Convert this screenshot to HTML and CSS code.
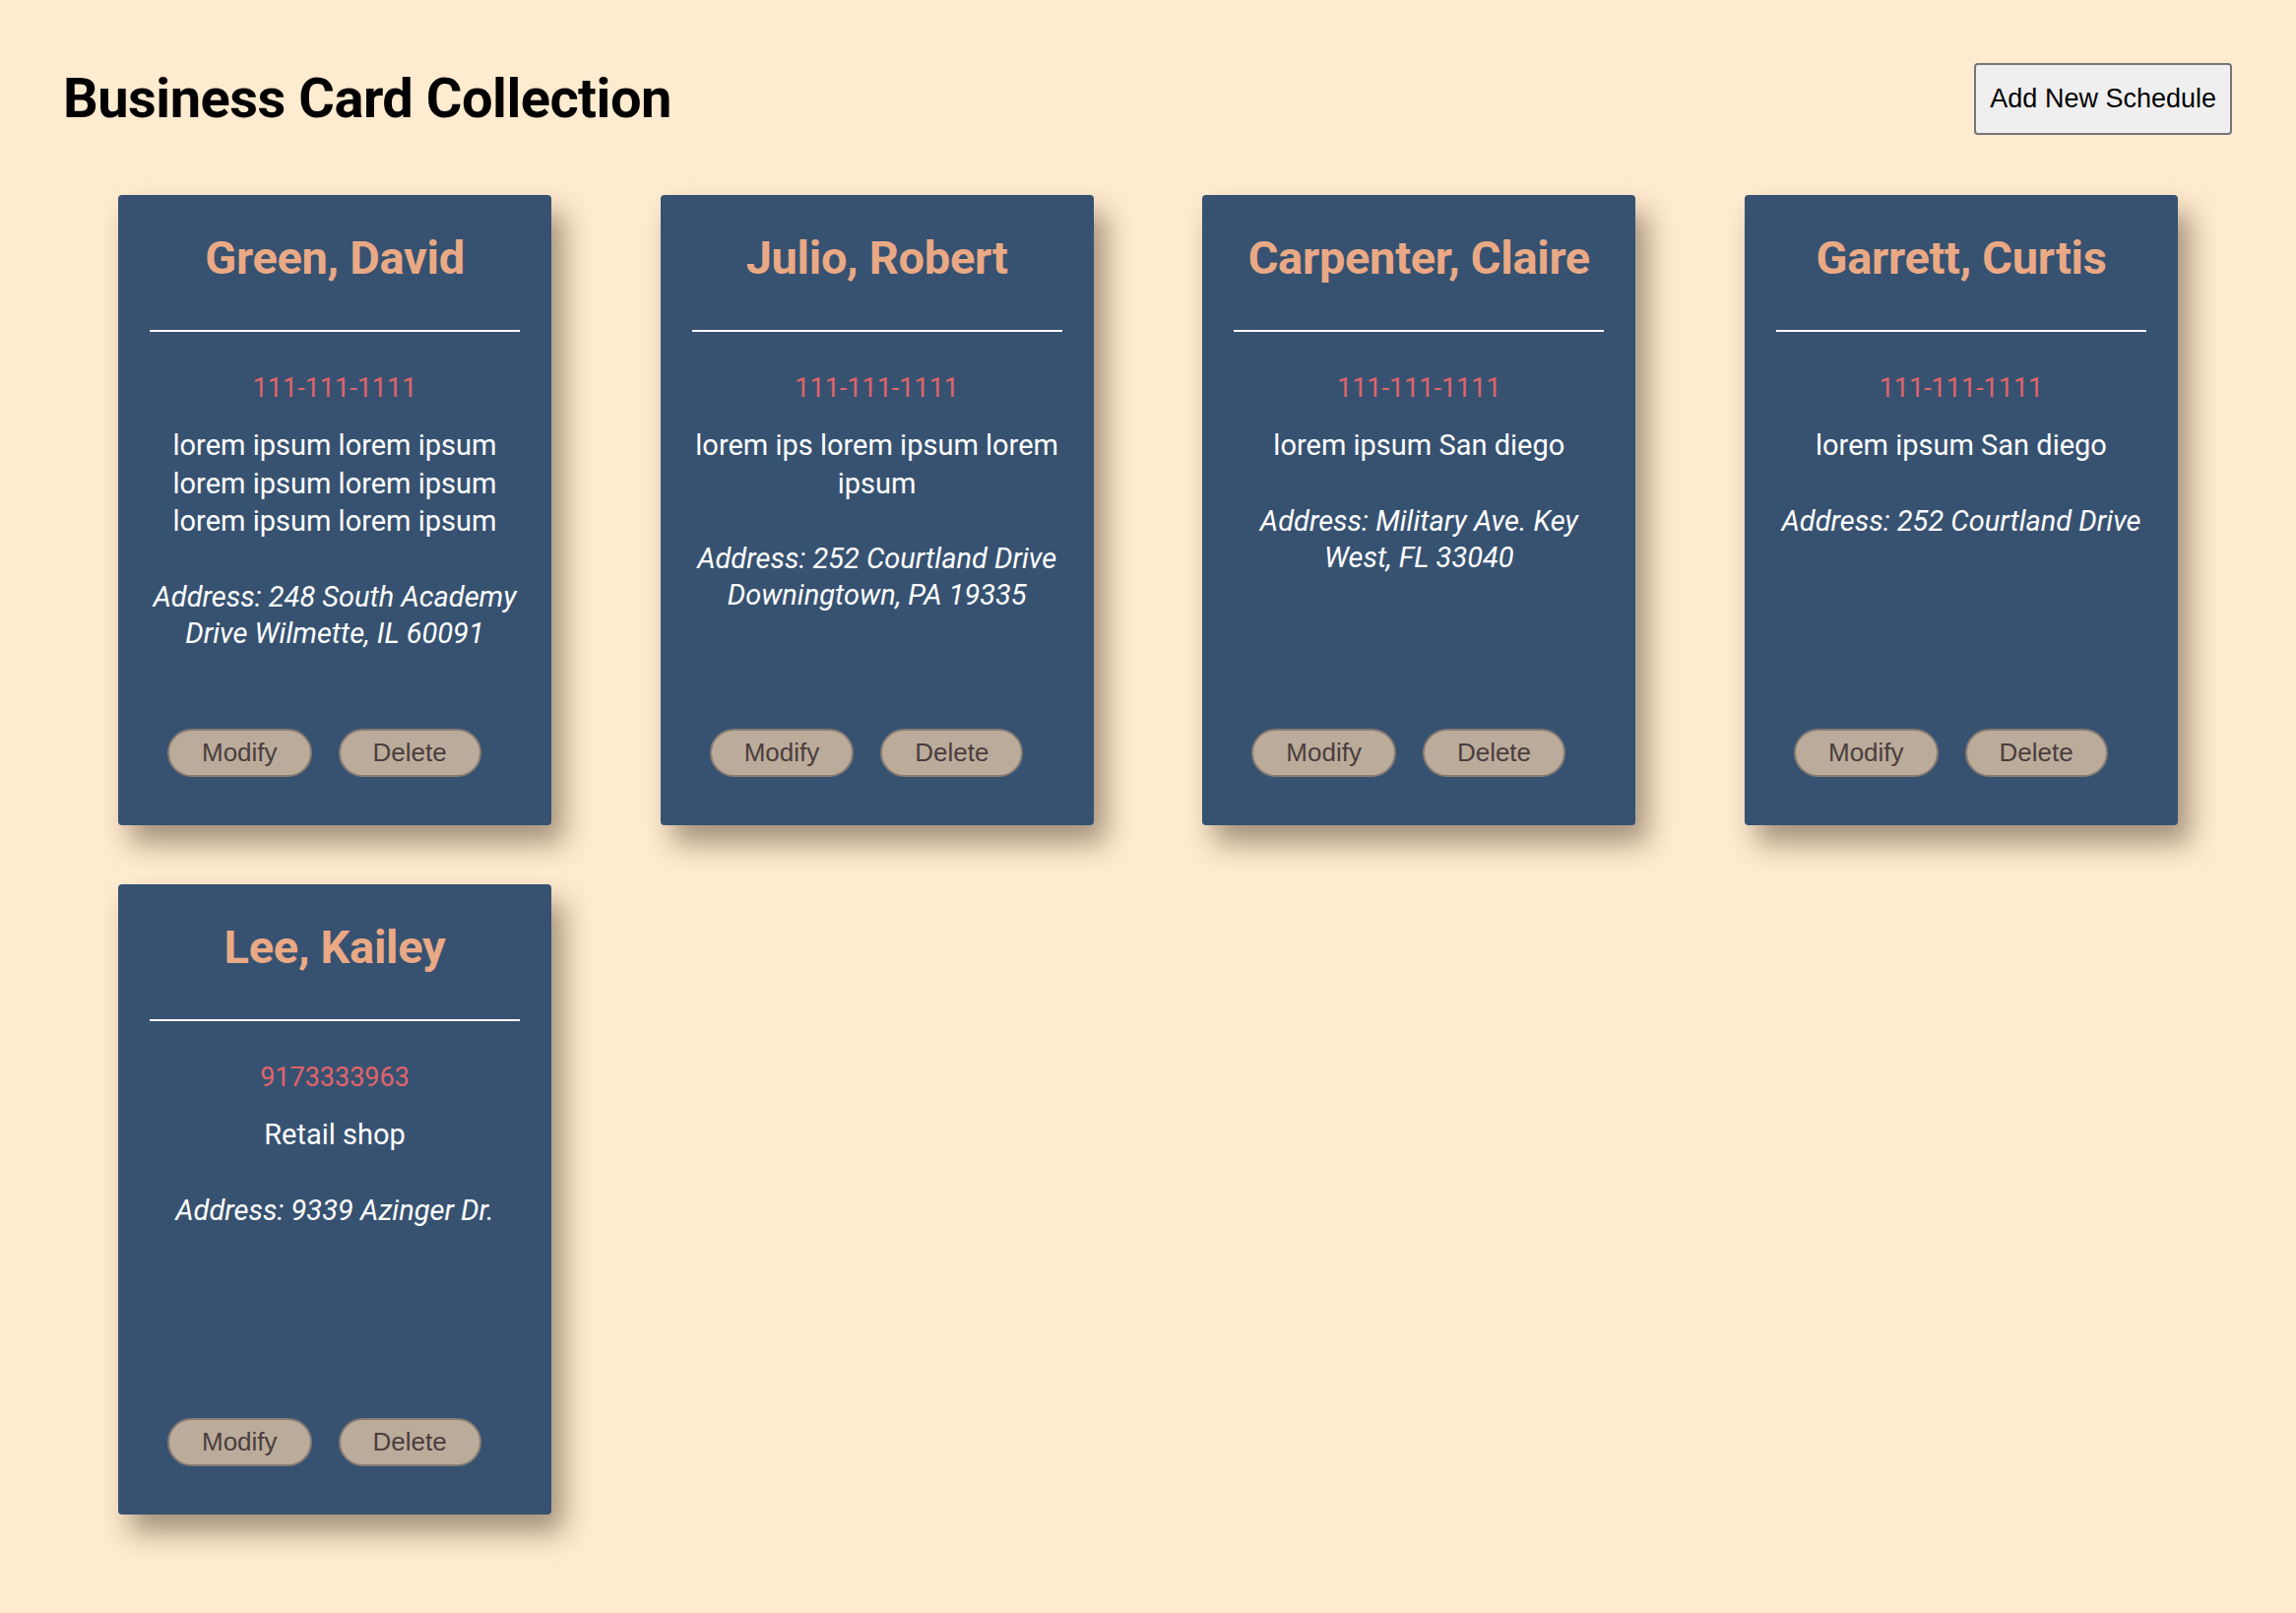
FILE: index.html
```html
<!DOCTYPE html>
<html lang="en">
<head>
<meta charset="utf-8">
<title>Business Card Collection</title>
<link rel="stylesheet" href="styles.css">
</head>
<body>
<header class="header">
  <h1 class="title">Business Card Collection</h1>
  <button class="add-btn">Add New Schedule</button>
</header>
<main class="grid">
  <article class="card">
    <h2 class="name">Green, David</h2>
    <hr class="divider">
    <p class="phone">111-111-1111</p>
    <p class="desc">lorem ipsum lorem ipsum lorem ipsum lorem ipsum lorem ipsum lorem ipsum</p>
    <p class="address">Address: 248 South Academy Drive Wilmette, IL 60091</p>
    <div class="actions"><button class="act">Modify</button><button class="act">Delete</button></div>
  </article>
  <article class="card">
    <h2 class="name">Julio, Robert</h2>
    <hr class="divider">
    <p class="phone">111-111-1111</p>
    <p class="desc">lorem ips lorem ipsum lorem ipsum</p>
    <p class="address">Address: 252 Courtland Drive Downingtown, PA 19335</p>
    <div class="actions"><button class="act">Modify</button><button class="act">Delete</button></div>
  </article>
  <article class="card">
    <h2 class="name">Carpenter, Claire</h2>
    <hr class="divider">
    <p class="phone">111-111-1111</p>
    <p class="desc">lorem ipsum San diego</p>
    <p class="address">Address: Military Ave. Key West, FL 33040</p>
    <div class="actions"><button class="act">Modify</button><button class="act">Delete</button></div>
  </article>
  <article class="card">
    <h2 class="name">Garrett, Curtis</h2>
    <hr class="divider">
    <p class="phone">111-111-1111</p>
    <p class="desc">lorem ipsum San diego</p>
    <p class="address">Address: 252 Courtland Drive</p>
    <div class="actions"><button class="act">Modify</button><button class="act">Delete</button></div>
  </article>
  <article class="card">
    <h2 class="name">Lee, Kailey</h2>
    <hr class="divider">
    <p class="phone">9173333963</p>
    <p class="desc">Retail shop</p>
    <p class="address">Address: 9339 Azinger Dr.</p>
    <div class="actions"><button class="act">Modify</button><button class="act">Delete</button></div>
  </article>
</main>
</body>
</html>
```
FILE: styles.css
```css
html, body {
  margin: 0;
  padding: 0;
}
body {
  background: #ffebcf;
  font-family: Roboto, "Noto Sans", sans-serif;
  min-height: 1638px;
}
.header {
  display: flex;
  justify-content: space-between;
  align-items: center;
  padding: 64px 65px 0 64px;
}
.title {
  margin: 0;
  font-family: Roboto, sans-serif;
  font-weight: 700;
  font-size: 56px;
  line-height: 67px;
  letter-spacing: -0.5px;
  color: #000;
}
.add-btn {
  height: 73px;
  padding: 0 14px;
  font-family: "Liberation Sans", Arial, sans-serif;
  font-size: 27px;
  color: #000;
  background: #efefef;
  border: 2px solid #767676;
  border-radius: 4px;
}
.grid {
  display: grid;
  grid-template-columns: repeat(4, 440px);
  column-gap: 110.67px;
  row-gap: 60px;
  padding: 61px 0 0 120px;
}
.card {
  box-sizing: border-box;
  width: 440px;
  height: 640px;
  background: #375271;
  border-radius: 4px;
  box-shadow: 12px 18px 28px rgba(50, 35, 20, 0.45);
  display: flex;
  flex-direction: column;
  padding: 36px 30px 49px;
  color: #fff;
  text-align: center;
}
.name {
  margin: 0;
  font-size: 47px;
  line-height: 56px;
  font-weight: 700;
  color: #eaa985;
  letter-spacing: -0.3px;
  white-space: nowrap;
}
.divider {
  margin: 45px 2px 0;
  border: 0;
  height: 2px;
  background: #fff;
}
.phone {
  margin: 41px 0 0;
  font-size: 27px;
  line-height: 32px;
  color: #e0646b;
}
.desc {
  margin: 23px 0 0;
  font-size: 29px;
  line-height: 38.5px;
}
.address {
  margin: 39px 0 0;
  font-size: 29px;
  line-height: 37px;
  font-style: italic;
}
.actions {
  margin-top: auto;
  display: flex;
  gap: 27px;
  padding-left: 20px;
}
.act {
  height: 49px;
  padding: 0 33px;
  font-family: "Liberation Sans", Arial, sans-serif;
  font-size: 26px;
  color: #4a3e3e;
  background: #bbab9a;
  border: 2px solid #867b73;
  border-radius: 25px;
}
```
